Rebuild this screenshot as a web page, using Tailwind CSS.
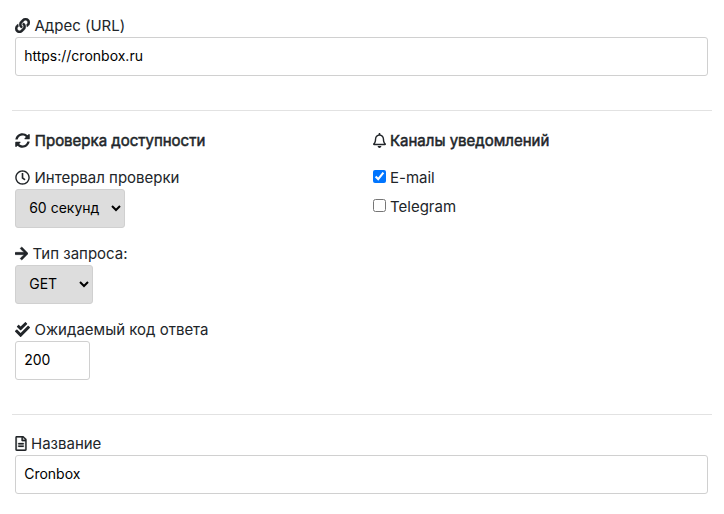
<!DOCTYPE html>
<html lang="ru">
<head>
<meta charset="utf-8">
<title>Cronbox</title>
<script src="https://cdn.jsdelivr.net/npm/@tailwindcss/browser@4"></script>
</head>
<body class="bg-white font-['Inter',sans-serif] text-[15px] leading-[22px] text-[#212529] h-[514px] overflow-hidden pl-3 pr-3">
<section class="pt-[15px] pl-[3px] pr-1">
  <label for="url" class="flex items-center gap-[4.5px] h-[22px]">
    <svg class="size-[15px] -mt-px" viewBox="0 0 512 512" fill="currentColor" stroke="currentColor" stroke-width="10"><path d="M326.612 185.391c59.747 59.809 58.927 155.698.36 214.59-.11.12-.24.25-.36.37l-67.2 67.2c-59.27 59.27-155.699 59.262-214.96 0-59.27-59.26-59.27-155.7 0-214.96l37.106-37.106c9.84-9.84 26.786-3.3 27.294 10.606.648 17.722 3.826 35.527 9.69 52.721 1.986 5.822.567 12.262-3.783 16.612l-13.087 13.087c-28.026 28.026-28.905 73.66-1.155 101.96 28.024 28.579 74.086 28.749 102.325.51l67.2-67.19c28.191-28.191 28.073-73.757 0-101.83-3.701-3.694-7.429-6.564-10.341-8.569a16.037 16.037 0 0 1-6.947-12.606c-.396-10.567 3.348-21.456 11.698-29.806l21.054-21.055c5.521-5.521 14.182-6.199 20.584-1.731a152.482 152.482 0 0 1 20.522 17.197zM467.547 44.449c-59.261-59.262-155.69-59.27-214.96 0l-67.2 67.2c-.12.12-.25.25-.36.37-58.566 58.892-59.387 154.781.36 214.59a152.454 152.454 0 0 0 20.521 17.196c6.402 4.468 15.064 3.789 20.584-1.731l21.054-21.055c8.35-8.35 12.094-19.239 11.698-29.806a16.037 16.037 0 0 0-6.947-12.606c-2.912-2.005-6.64-4.875-10.341-8.569-28.073-28.073-28.191-73.639 0-101.83l67.2-67.19c28.239-28.239 74.3-28.069 102.325.51 27.75 28.3 26.872 73.934-1.155 101.96l-13.087 13.087c-4.35 4.35-5.769 10.79-3.783 16.612 5.864 17.194 9.042 34.999 9.69 52.721.509 13.906 17.454 20.446 27.294 10.606l37.106-37.106c59.271-59.259 59.271-155.699.001-214.959z"/></svg>
    <span>Адрес (URL)</span>
  </label>
  <input id="url" type="text" value="https://cronbox.ru" class="block w-full h-[39px] px-[8.2px] pb-[3px] border border-[#d0d0d0] rounded-[3px] text-[14px] text-black bg-white">
</section>
<hr class="mt-[34px] border-t border-[#e2e2e2]">
<section class="flex pl-[3px] pt-[19px] h-[303px]">
  <div class="w-[358px]">
    <div class="flex items-center gap-[4.8px] h-[22px] [-webkit-text-stroke:0.5px_currentColor]">
      <svg class="size-[15px] -mt-px" viewBox="0 0 512 512" fill="currentColor"><path d="M370.72 133.28C339.458 104.008 298.888 87.962 255.848 88c-77.458.068-144.328 53.178-162.791 126.85-1.344 5.363-6.122 9.15-11.651 9.15H24.103c-7.498 0-13.194-6.807-11.807-14.176C33.933 94.924 134.813 8 256 8c66.448 0 126.791 26.136 171.315 68.685L463.03 40.97C478.149 25.851 504 36.559 504 57.941V192c0 13.255-10.745 24-24 24H345.941c-21.382 0-32.09-25.851-16.971-40.971l41.75-41.749zM32 296h134.059c21.382 0 32.09 25.851 16.971 40.971l-41.75 41.75c31.262 29.273 71.835 45.319 114.876 45.28 77.418-.07 144.315-53.144 162.787-126.849 1.344-5.363 6.122-9.15 11.651-9.15h57.304c7.498 0 13.194 6.807 11.807 14.176C478.067 417.076 377.187 504 256 504c-66.448 0-126.791-26.136-171.315-68.685L48.97 471.03C33.851 486.149 8 475.441 8 454.059V320c0-13.255 10.745-24 24-24z"/></svg>
      <span>Проверка доступности</span>
    </div>
    <label for="interval" class="flex items-center gap-[4.5px] h-[22px] mt-[15px]">
      <svg class="size-[15px] -mt-px" viewBox="0 0 512 512" fill="currentColor"><path d="M256 8C119 8 8 119 8 256s111 248 248 248 248-111 248-248S393 8 256 8zm0 448c-110.500 0-200-89.500-200-200S145.500 56 256 56s200 89.500 200 200-89.500 200-200 200zm61.800-104.400l-84.900-61.700c-3.100-2.300-4.900-5.900-4.900-9.700V116c0-6.600 5.400-12 12-12h32c6.600 0 12 5.400 12 12v141.700l66.800 48.600c5.400 3.900 6.500 11.400 2.600 16.800L334.600 349c-3.900 5.300-11.400 6.500-16.800 2.600z"/></svg>
      <span>Интервал проверки</span>
    </label>
    <select id="interval" class="block w-[110px] h-[39px] pl-[9.2px] pb-[3px] border border-[#d0d0d0] rounded-[3px] bg-[#ddd] text-[14px] text-black"><option>60 секунд</option></select>
    <label for="method" class="flex items-center gap-[4.5px] h-[22px] mt-[15px]">
      <svg class="w-[13px] h-[15px] -mt-px" viewBox="0 0 448 512" fill="currentColor" stroke="currentColor" stroke-width="16"><path d="M190.500 66.900l22.200-22.200c9.400-9.400 24.600-9.400 33.900 0L441 239c9.400 9.400 9.400 24.600 0 33.900L246.600 467.300c-9.400 9.400-24.600 9.400-33.900 0l-22.200-22.200c-9.500-9.500-9.300-25 .4-34.300L311.400 296H24c-13.300 0-24-10.700-24-24v-32c0-13.300 10.700-24 24-24h287.400L190.900 101.200c-9.800-9.300-10-24.800-.4-34.300z"/></svg>
      <span>Тип запроса:</span>
    </label>
    <select id="method" class="block w-[78px] h-[39px] pl-[9.2px] pb-[3px] border border-[#d0d0d0] rounded-[3px] bg-[#ddd] text-[14px] text-black"><option>GET</option></select>
    <label for="code" class="flex items-center gap-[4.5px] h-[22px] mt-[15px]">
      <svg class="size-[15px] -mt-px" viewBox="0 0 512 512" fill="currentColor"><path d="M505 174.800l-39.600-39.600c-9.400-9.400-24.600-9.400-33.900 0L192 374.700 80.600 263.200c-9.400-9.400-24.600-9.400-33.900 0L7 302.900c-9.400 9.400-9.400 24.600 0 34L175 505c9.400 9.400 24.600 9.400 33.900 0l296-296.200c9.400-9.500 9.400-24.700.1-34zm-324.300 106c6.200 6.300 16.400 6.300 22.600 0l208-208.200c6.200-6.300 6.200-16.400 0-22.600L366.100 4.700c-6.200-6.300-16.400-6.300-22.600 0L192 156.200l-55.400-55.500c-6.200-6.300-16.400-6.300-22.600 0L68.700 146c-6.200 6.300-6.200 16.400 0 22.600l112 112.200z"/></svg>
      <span>Ожидаемый код ответа</span>
    </label>
    <input id="code" type="text" value="200" class="block w-[75px] h-[39px] px-[8.2px] pb-[3px] border border-[#d0d0d0] rounded-[3px] text-[14px] text-black bg-white">
  </div>
  <div>
    <div class="flex items-center gap-1 h-[22px] [-webkit-text-stroke:0.5px_currentColor]">
      <svg class="w-[13px] h-[15px] -mt-px" viewBox="0 0 448 512" fill="currentColor"><path d="M439.390 362.290c-19.320-20.760-55.470-51.990-55.470-154.290 0-77.700-54.480-139.900-127.940-155.160V32c0-17.670-14.320-32-31.980-32s-31.980 14.330-31.980 32v20.840C118.560 68.100 64.080 130.300 64.080 208c0 102.300-36.150 133.530-55.470 154.290-6 6.450-8.660 14.160-8.610 21.710.110 16.400 12.980 32 32.100 32h383.800c19.120 0 32-15.600 32.100-32 .05-7.550-2.610-15.270-8.610-21.710zM67.530 368c21.220-27.970 44.420-74.330 44.530-159.420 0-.200-.06-.380-.06-.580 0-61.860 50.140-112 112-112s112 50.140 112 112c0 .200-.06.380-.06.580.110 85.100 23.310 131.460 44.530 159.420H67.530zM224 512c35.320 0 63.970-28.650 63.970-64H160.030c0 35.350 28.650 64 63.970 64z"/></svg>
      <span>Каналы уведомлений</span>
    </div>
    <label class="flex items-center gap-1 h-[22px] mt-[15px]"><input type="checkbox" checked class="size-[13px] -mt-[3px]"><span>E-mail</span></label>
    <label class="flex items-center gap-1 h-[22px] mt-[7px]"><input type="checkbox" class="size-[13px] -mt-[3px]"><span>Telegram</span></label>
  </div>
</section>
<hr class="border-t border-[#e2e2e2]">
<section class="pt-[18px] pl-[3px] pr-1">
  <label for="name" class="flex items-center gap-1 h-[22px]">
    <svg class="w-[12px] h-[15px] -mt-px" viewBox="0 0 384 512" fill="currentColor" stroke="currentColor" stroke-width="8"><path d="M288 248v28c0 6.600-5.400 12-12 12H108c-6.600 0-12-5.400-12-12v-28c0-6.600 5.400-12 12-12h168c6.600 0 12 5.400 12 12zm-12 72H108c-6.600 0-12 5.400-12 12v28c0 6.600 5.400 12 12 12h168c6.600 0 12-5.400 12-12v-28c0-6.600-5.400-12-12-12zm108-188.100V464c0 26.500-21.500 48-48 48H48c-26.500 0-48-21.500-48-48V48C0 21.500 21.500 0 48 0h204.100C264.800 0 277 5.100 286 14.100L369.900 98c9 8.900 14.100 21.200 14.100 33.900zm-128-80V128h76.100L256 51.900zM336 464V176H232c-13.300 0-24-10.700-24-24V48H48v416h288z"/></svg>
    <span>Название</span>
  </label>
  <input id="name" type="text" value="Cronbox" class="block w-full h-[39px] px-[8.2px] pb-[3px] border border-[#d0d0d0] rounded-[3px] text-[14px] text-black bg-white">
</section>
</body>
</html>
